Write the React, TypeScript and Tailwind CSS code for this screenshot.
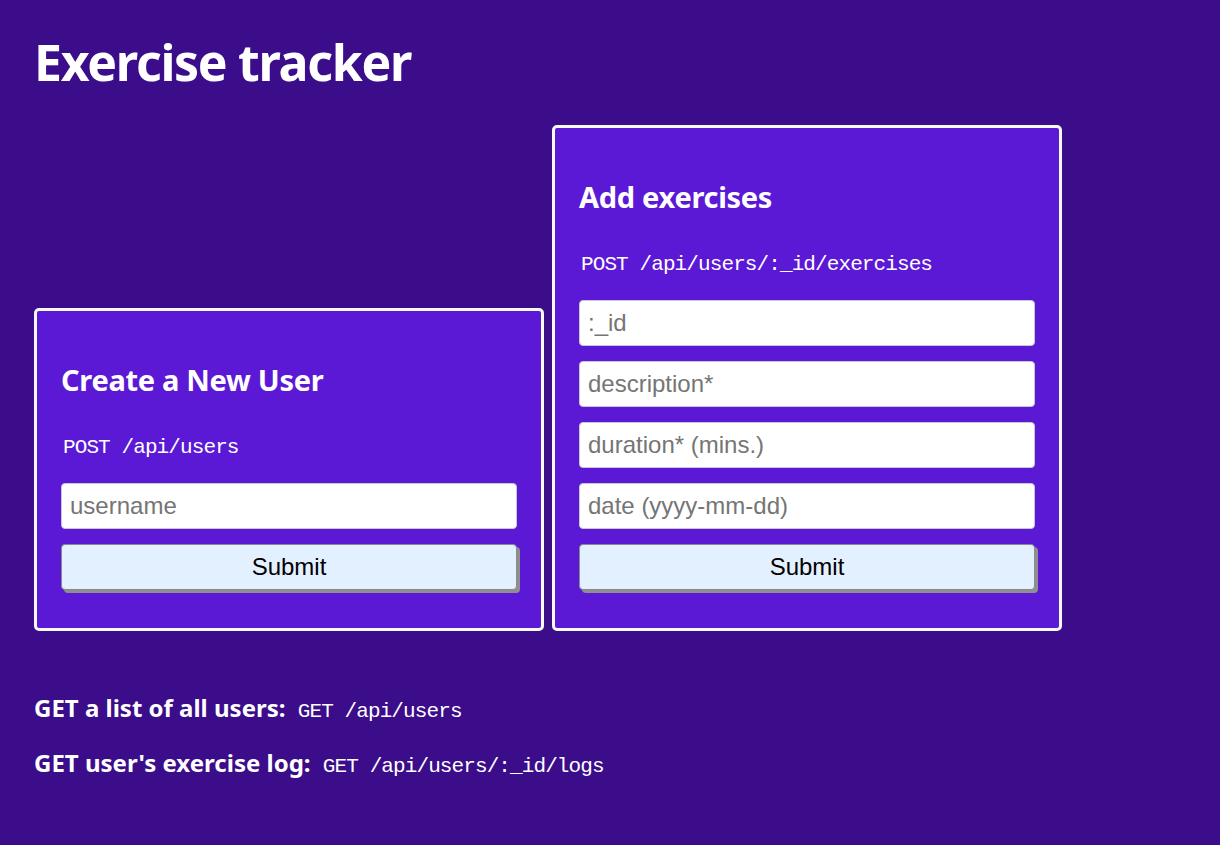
const arial = '[font-family:"Liberation_Sans",Arial,sans-serif]';
const mono = '[font-family:"Liberation_Mono","Courier_New",monospace]';

const inputClass = `h-[46px] w-full rounded-[4px] border border-[#c8c8d0] bg-white px-2 text-[24px] text-black placeholder:text-[#757575] outline-none ${arial}`;

const SubmitButton = () => (
  <button
    type="button"
    className={`h-[46px] w-full rounded-[4px] border border-[#8a8a8a] bg-[#e2f0ff] text-[24px] text-black shadow-[3px_3px_0_#8f8f8f] ${arial}`}
  >
    Submit
  </button>
);

const Card = ({
  title,
  endpoint,
  fields,
}: {
  title: string;
  endpoint: string;
  fields: string[];
}) => (
  <div className="w-[510px] rounded-[5px] border-[3px] border-[#f6faea] bg-[#5b19d6] px-6 pt-[54px] pb-[38px]">
    <h2 className="text-[29px] font-bold leading-none tracking-[-0.3px] text-white">{title}</h2>
    <p className={`mt-[43px] mb-[25px] ml-[2px] text-[21px] leading-none tracking-[-0.9px] text-white ${mono}`}>
      {endpoint}
    </p>
    <form className="flex flex-col gap-[15px]">
      {fields.map((f) => (
        <input key={f} type="text" placeholder={f} className={inputClass} />
      ))}
      <SubmitButton />
    </form>
  </div>
);

const App = () => {
  return (
    <div
      className="min-h-[845px] w-full bg-[#3b0d8a] px-[34px] pt-[37px] text-white"
      style={{ fontFamily: '"Noto Sans", "Open Sans", sans-serif' }}
    >
      <h1 className="text-[50px] font-bold leading-none tracking-[-1.3px]">Exercise tracker</h1>

      <div className="mt-[38px] flex items-end gap-[8px]">
        <Card title="Create a New User" endpoint="POST /api/users" fields={['username']} />
        <Card
          title="Add exercises"
          endpoint="POST /api/users/:_id/exercises"
          fields={[':_id', 'description*', 'duration* (mins.)', 'date (yyyy-mm-dd)']}
        />
      </div>

      <div className="mt-[65px] flex flex-col gap-[29px]">
        <p className="text-[24px] leading-none font-bold">
          GET a list of all users:{' '}
          <code className={`ml-[6px] text-[21px] leading-none font-normal tracking-[-0.9px] ${mono}`}>
            GET /api/users
          </code>
        </p>
        <p className="text-[24px] leading-none font-bold">
          GET user's exercise log:{' '}
          <code className={`ml-[6px] text-[21px] leading-none font-normal tracking-[-0.9px] ${mono}`}>
            GET /api/users/:_id/logs
          </code>
        </p>
      </div>
    </div>
  );
};

export default App;
